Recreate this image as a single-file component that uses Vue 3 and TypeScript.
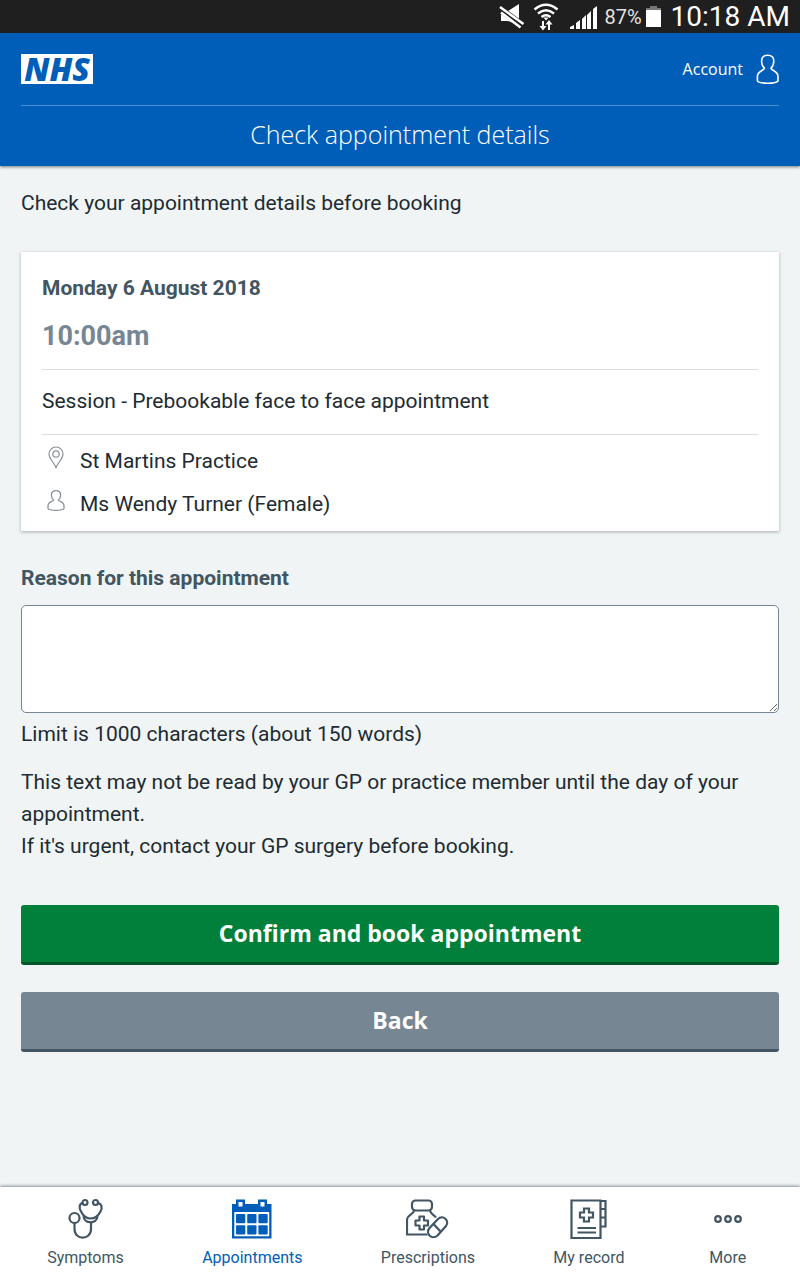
<script setup lang="ts">
import { ref } from 'vue'

interface NavItem {
  id: string
  label: string
}

const reason = ref('')
const active = ref('appointments')
const navItems: NavItem[] = [
  { id: 'symptoms', label: 'Symptoms' },
  { id: 'appointments', label: 'Appointments' },
  { id: 'prescriptions', label: 'Prescriptions' },
  { id: 'record', label: 'My record' },
  { id: 'more', label: 'More' },
]
</script>

<template>
  <div class="screen">
    <div class="status">
      <svg class="mute" width="26" height="26" viewBox="0 0 26 26" aria-hidden="true">
        <path d="M2 7h7l11-7v21L9 17H2z" fill="#fff" />
        <path d="M0 4 25 23" stroke="#1f1f1f" stroke-width="7" />
        <path d="M1 3 24.500 20M2 8.500 21.500 23.500" stroke="#fff" stroke-width="2.600" />
      </svg>
      <svg class="wifi" width="26" height="28" viewBox="0 0 26 28" fill="none" stroke="#fff" aria-hidden="true">
        <path d="M1.500 6.500Q13-3 24.500 6.500M5 10.500Q13 4 21 10.500M8.500 14Q13 10.500 17.500 14" stroke-width="2.400" />
        <path d="M10.500 14.500h5L13 17.500z" fill="#fff" stroke="none" />
        <path d="M10 18v7M16 27v-7" stroke-width="2" />
        <path d="M6.500 23h7L10 27.500zM12.500 21.500h7L16 17z" fill="#fff" stroke="none" />
      </svg>
      <svg class="signal" width="27" height="24" viewBox="0 0 27 24" fill="#fff" aria-hidden="true">
        <path d="M0 24v-2l4-2v4zM6 24v-6l4-3v9zM12 24V14l4-4v14zM17 24V10l4-4v18zM23 24V4l4-3v23z" />
      </svg>
      <span class="percent">87%</span>
      <svg class="battery" width="15" height="21" viewBox="0 0 15 21" aria-hidden="true">
        <path d="M4 0h7v2h4v3H0V2h4z" fill="#777" />
        <path d="M0 4h15v17H0z" fill="#fff" />
      </svg>
      <span class="clock">10:18 AM</span>
    </div>

    <header class="header">
      <div class="brand-row">
        <a class="logo" href="#home">NHS</a>
        <a class="account" href="#account">
          <span>Account</span>
          <svg width="24" height="32" viewBox="0 0 24 32" fill="none" stroke="#fff" stroke-width="1.600" aria-hidden="true">
            <path d="M9.400 15.200C7.500 13.500 6.600 11 6.600 8c0-3.900 2.400-5.700 6.100-5.700s6.100 1.800 6.100 5.700c0 3-.9 5.500-2.800 7.200.3 2.600 7 2.500 7 8.300v4.300c-1.800 3.200-18.800 3.200-20.600 0v-4.300c0-5.800 6.700-5.700 7-8.300z" />
          </svg>
        </a>
      </div>
      <h1 class="title">Check appointment details</h1>
    </header>

    <main class="main">
      <p class="intro">Check your appointment details before booking</p>

      <section class="card">
        <h2 class="date">Monday 6 August 2018</h2>
        <p class="time">10:00am</p>
        <p class="session">Session - Prebookable face to face appointment</p>
        <ul class="facts">
          <li>
            <svg width="27" height="24" viewBox="0 0 27 24" fill="none" stroke="#8b9197" stroke-width="1.200" aria-hidden="true">
              <path d="M14 22.500C12 17.500 7 13.500 7 9a7 7 0 0 1 14 0c0 4.500-5 8.500-7 13.500z" />
              <circle cx="14" cy="9" r="3.200" />
            </svg>
            <span>St Martins Practice</span>
          </li>
          <li>
            <svg width="27" height="24" viewBox="0 0 27 24" fill="none" stroke="#8b9197" stroke-width="1.300" aria-hidden="true">
              <path d="M11.600 12C10 10.700 9.400 9 9.400 7c0-2.800 1.800-4.400 4.600-4.400S18.600 4.200 18.600 7c0 2-.6 3.700-2.200 5 .2 1.700 5.600 1.500 5.600 6v2.500c-1.500 2.400-14.500 2.400-16 0V18c0-4.500 5.400-4.300 5.600-6z" />
            </svg>
            <span>Ms Wendy Turner (Female)</span>
          </li>
        </ul>
      </section>

      <label class="reason-label" for="reason">Reason for this appointment</label>
      <textarea id="reason" v-model="reason" class="reason" maxlength="1000"></textarea>
      <p class="limit">Limit is 1000 characters (about 150 words)</p>
      <p class="note">
        This text may not be read by your GP or practice member until the day of your appointment.<br />
        If it's urgent, contact your GP surgery before booking.
      </p>

      <button class="button confirm" type="button">Confirm and book appointment</button>
      <button class="button back" type="button">Back</button>
    </main>

    <nav class="nav">
      <a
        v-for="item in navItems"
        :key="item.id"
        :href="'#' + item.id"
        class="nav-item"
        :class="{ active: item.id === active }"
        @click="active = item.id"
      >
        <svg v-if="item.id === 'symptoms'" width="44" height="44" viewBox="-5 0 44 44" fill="none" stroke="currentColor" stroke-width="2.200" aria-hidden="true">
          <circle cx="17" cy="5.500" r="2.500" />
          <circle cx="27.500" cy="5.500" r="2.500" />
          <circle cx="6.500" cy="21" r="5" />
          <path d="M14.500 6c-3.500 1-3.500 5-1.500 8.500C14.500 17.500 17 21.500 22.500 21.500s8.500-4 10-7C34.500 11 34 7 30 6" />
          <path d="M15.500 18.500c0 9 14 9 14 0" />
          <path d="M6.500 26v6c0 11.500 16.500 11.500 16.500 0v-6.500" />
        </svg>
        <svg v-else-if="item.id === 'appointments'" width="44" height="44" viewBox="0 0 44 44" aria-hidden="true">
          <path fill="currentColor" fill-rule="evenodd" d="M2 7h4V2.500h9V7h13V2.500h9V7h4.500v34.500H2zM8.500 5v4.500h4V5zM30.500 5v4.500h4V5zM4.300 15v24.200h34.900V15z" />
          <g fill="currentColor">
            <rect x="6" y="17" width="9.300" height="9.300" rx="1" />
            <rect x="17.200" y="17" width="9.300" height="9.300" rx="1" />
            <rect x="28.400" y="17" width="9.300" height="9.300" rx="1" />
            <rect x="6" y="28.200" width="9.300" height="9.300" rx="1" />
            <rect x="17.200" y="28.200" width="9.300" height="9.300" rx="1" />
            <rect x="28.400" y="28.200" width="9.300" height="9.300" rx="1" />
          </g>
        </svg>
        <svg v-else-if="item.id === 'prescriptions'" width="44" height="44" viewBox="1 0 44 44" fill="none" stroke="currentColor" stroke-width="2.200" stroke-linejoin="round" aria-hidden="true">
          <rect x="7" y="3.500" width="20" height="10" rx="3.500" />
          <path d="M9 13.500c0 4-7 4-7 9.500v14.500h20.500M25 13.500c0 3 4 4 6 7" />
          <path d="M14.500 19.500h4.500v4h4v5h-4v4h-4.500v-4h-4v-5h4z" />
          <path d="M24.500 31 33 22c5-5 12 2 8 7l-8.500 9.500c-5.500 5-12.500-2-8-7.500zM28.500 27l7 7.500" />
        </svg>
        <svg v-else-if="item.id === 'record'" width="44" height="44" viewBox="0 0 44 44" fill="none" stroke="currentColor" stroke-width="2.200" aria-hidden="true">
          <path d="M4.500 3.500H33.500v37.500H4.500zM33.500 4h5v25.500h-5M33.500 12h5M33.500 20.500h5" />
          <path d="M17 11.500h5v4h4v5h-4v4h-5v-4h-4v-5h4zM10.500 31H29M10.500 35.500H29" />
        </svg>
        <svg v-else width="44" height="44" viewBox="0 0 44 44" fill="none" stroke="currentColor" stroke-width="2.200" aria-hidden="true">
          <circle cx="12" cy="22" r="2.800" />
          <circle cx="22" cy="22" r="2.800" />
          <circle cx="32" cy="22" r="2.800" />
        </svg>
        <span>{{ item.label }}</span>
      </a>
    </nav>
  </div>
</template>

<style>
body {
  margin: 0;
  background: #f0f4f5;
}
</style>

<style scoped>
* {
  box-sizing: border-box;
}

h1,
h2,
p,
ul {
  margin: 0;
  padding: 0;
}

a {
  color: inherit;
  text-decoration: none;
}

.screen {
  display: flex;
  flex-direction: column;
  min-height: 100vh;
  color: #212b32;
  font-family: Roboto, sans-serif;
  font-size: 21px;
  line-height: 32px;
}

.status {
  display: flex;
  align-items: center;
  justify-content: flex-end;
  height: 33px;
  padding-right: 10px;
  background: #1f1f1f;
  color: #fff;
}

.wifi {
  margin-left: 8px;
}

.signal {
  margin-left: 11px;
}

.percent {
  margin-left: 7px;
  color: #e2e2e2;
  font-size: 20px;
}

.battery {
  margin-left: 4px;
}

.clock {
  margin-left: 10px;
  font-size: 28px;
}

.header {
  z-index: 1;
  padding: 0 21px;
  background: #005eb8;
  color: #fff;
  font-family: "Open Sans", sans-serif;
  box-shadow: 0 1px 3px rgba(33, 43, 50, 0.6);
}

.brand-row {
  display: flex;
  align-items: center;
  justify-content: space-between;
  height: 73px;
  border-bottom: 1px solid #4c8fd0;
}

.logo {
  width: 72px;
  height: 30px;
  background: #fff;
  color: #005eb8;
  font-size: 32px;
  font-style: italic;
  font-weight: 800;
  line-height: 30px;
  text-align: center;
}

.account {
  display: flex;
  align-items: center;
  gap: 12px;
  font-size: 16px;
}

.title {
  height: 60px;
  font-size: 25px;
  font-weight: 350;
  line-height: 56px;
  text-align: center;
}

.main {
  flex: 1;
  padding: 21px;
}

.card {
  margin-top: 33px;
  padding: 20px 21px 11px;
  background: #fff;
  box-shadow: 0 1px 3px rgba(33, 43, 50, 0.35);
}

.date {
  color: #425563;
  font-size: 21px;
  font-weight: 700;
}

.time {
  padding: 16px 0 17px;
  border-bottom: 1px solid #d8dde0;
  color: #768692;
  font-size: 27px;
  font-weight: 700;
}

.session {
  padding: 15px 0 17px;
  border-bottom: 1px solid #d8dde0;
}

.facts {
  display: flex;
  flex-direction: column;
  gap: 11px;
  padding-top: 10px;
  list-style: none;
}

.facts li {
  display: flex;
  gap: 11px;
}

.reason-label {
  display: block;
  margin-top: 31px;
  color: #425563;
  font-weight: 700;
}

.reason {
  display: block;
  width: 100%;
  height: 108px;
  margin-top: 11px;
  padding: 10px;
  border: 1px solid #768692;
  border-radius: 5px;
  background: #fff;
  color: inherit;
  font: inherit;
  resize: vertical;
}

.limit {
  margin-top: 5px;
}

.note {
  margin-top: 16px;
}

.button {
  display: block;
  width: 100%;
  height: 60px;
  padding: 0 0 2px;
  border: 0;
  border-bottom: 3px solid;
  border-radius: 3px;
  color: #fff;
  font-family: "Open Sans", sans-serif;
  font-size: 23px;
  font-weight: 700;
}

.confirm {
  margin-top: 43px;
  border-color: #00562b;
  background: #00803a;
}

.back {
  margin-top: 27px;
  border-color: #425563;
  background: #768692;
}

.nav {
  display: flex;
  justify-content: space-around;
  height: 93px;
  padding: 10px 8px 0;
  background: #fff;
  color: #425563;
  font-size: 16px;
  line-height: 24px;
  box-shadow: 0 -1px 3px rgba(33, 43, 50, 0.5);
}

.nav-item {
  display: flex;
  flex-direction: column;
  align-items: center;
  gap: 5px;
  min-width: 50px;
}

.nav-item.active {
  color: #005eb8;
}
</style>
